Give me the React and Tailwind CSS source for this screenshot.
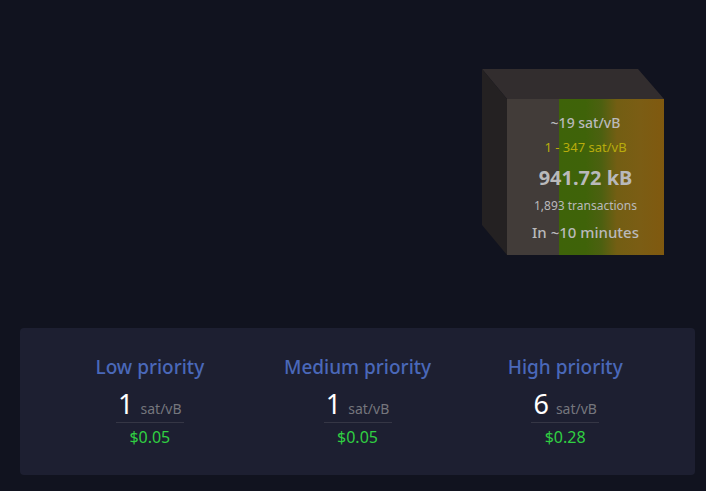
import React from 'react';

// Projected block, drawn as a cube with the fee range as its front face
const MempoolBlock = ({ medianFee, feeRange, size, transactions, eta }) => (
    <a href="#block" className="relative block pl-[25px] pt-[30px]">
        <svg className="absolute left-0 top-0" width="182" height="186" viewBox="0 0 182 186" aria-hidden="true">
            <polygon points="0,0 156,0 182,30 25,30" fill="#322d2e" />
            <polygon points="0,0 25,30 25,186 0,156" fill="#242122" />
        </svg>
        <div className="relative flex h-[156px] w-[157px] flex-col items-center whitespace-nowrap bg-[linear-gradient(to_right,#423c39_33%,#3e6309_33%,#3f6309_50%,#4c6010_60%,#735e13_70%,#7b5d14_85%,#80590f_100%)] pt-3 text-[#b9b9bb]">
            <div className="text-sm font-medium leading-6">{medianFee}</div>
            <div className="text-[13px] leading-6 text-[#b8ac0c]">{feeRange}</div>
            <div className="text-xl font-bold leading-[38px]">{size}</div>
            <div className="text-xs leading-[18px]">{transactions}</div>
            <div className="text-[15px] font-medium leading-[34px]">{eta}</div>
        </div>
    </a>
);

// One recommended fee
const FeeItem = ({ label, fee, fiat }) => (
    <div className="flex flex-1 flex-col items-center">
        <h5 className="text-[19px] font-medium leading-6 text-[#4a68b9]">{label}</h5>
        <div className="mt-[9px] w-[68px] whitespace-nowrap border-b border-[#353645] pb-0.5 text-center text-[27px] leading-8 text-white">
            {fee} <span className="text-sm text-[#75767d]">sat/vB</span>
        </div>
        <div className="mt-0.5 text-base leading-6 text-[#30cf42]">{fiat}</div>
    </div>
);

export default function App() {
    const fees = [
        { label: 'Low priority', fee: 1, fiat: '$0.05' },
        { label: 'Medium priority', fee: 1, fiat: '$0.05' },
        { label: 'High priority', fee: 6, fiat: '$0.28' },
    ];

    return (
        <main className="min-h-screen bg-[#11131f] pb-4 pl-5 pr-[11px] pt-[69px] font-['Noto_Sans','Open_Sans',sans-serif]">
            <div className="flex justify-end pr-[31px]">
                <MempoolBlock
                    medianFee="~19 sat/vB"
                    feeRange="1 - 347 sat/vB"
                    size="941.72 kB"
                    transactions="1,893 transactions"
                    eta="In ~10 minutes"
                />
            </div>

            <section className="mt-[73px] flex rounded bg-[#1d1f31] px-[26px] pb-[26px] pt-[27px]">
                {fees.map((item) => (
                    <FeeItem key={item.label} label={item.label} fee={item.fee} fiat={item.fiat} />
                ))}
            </section>
        </main>
    );
}
